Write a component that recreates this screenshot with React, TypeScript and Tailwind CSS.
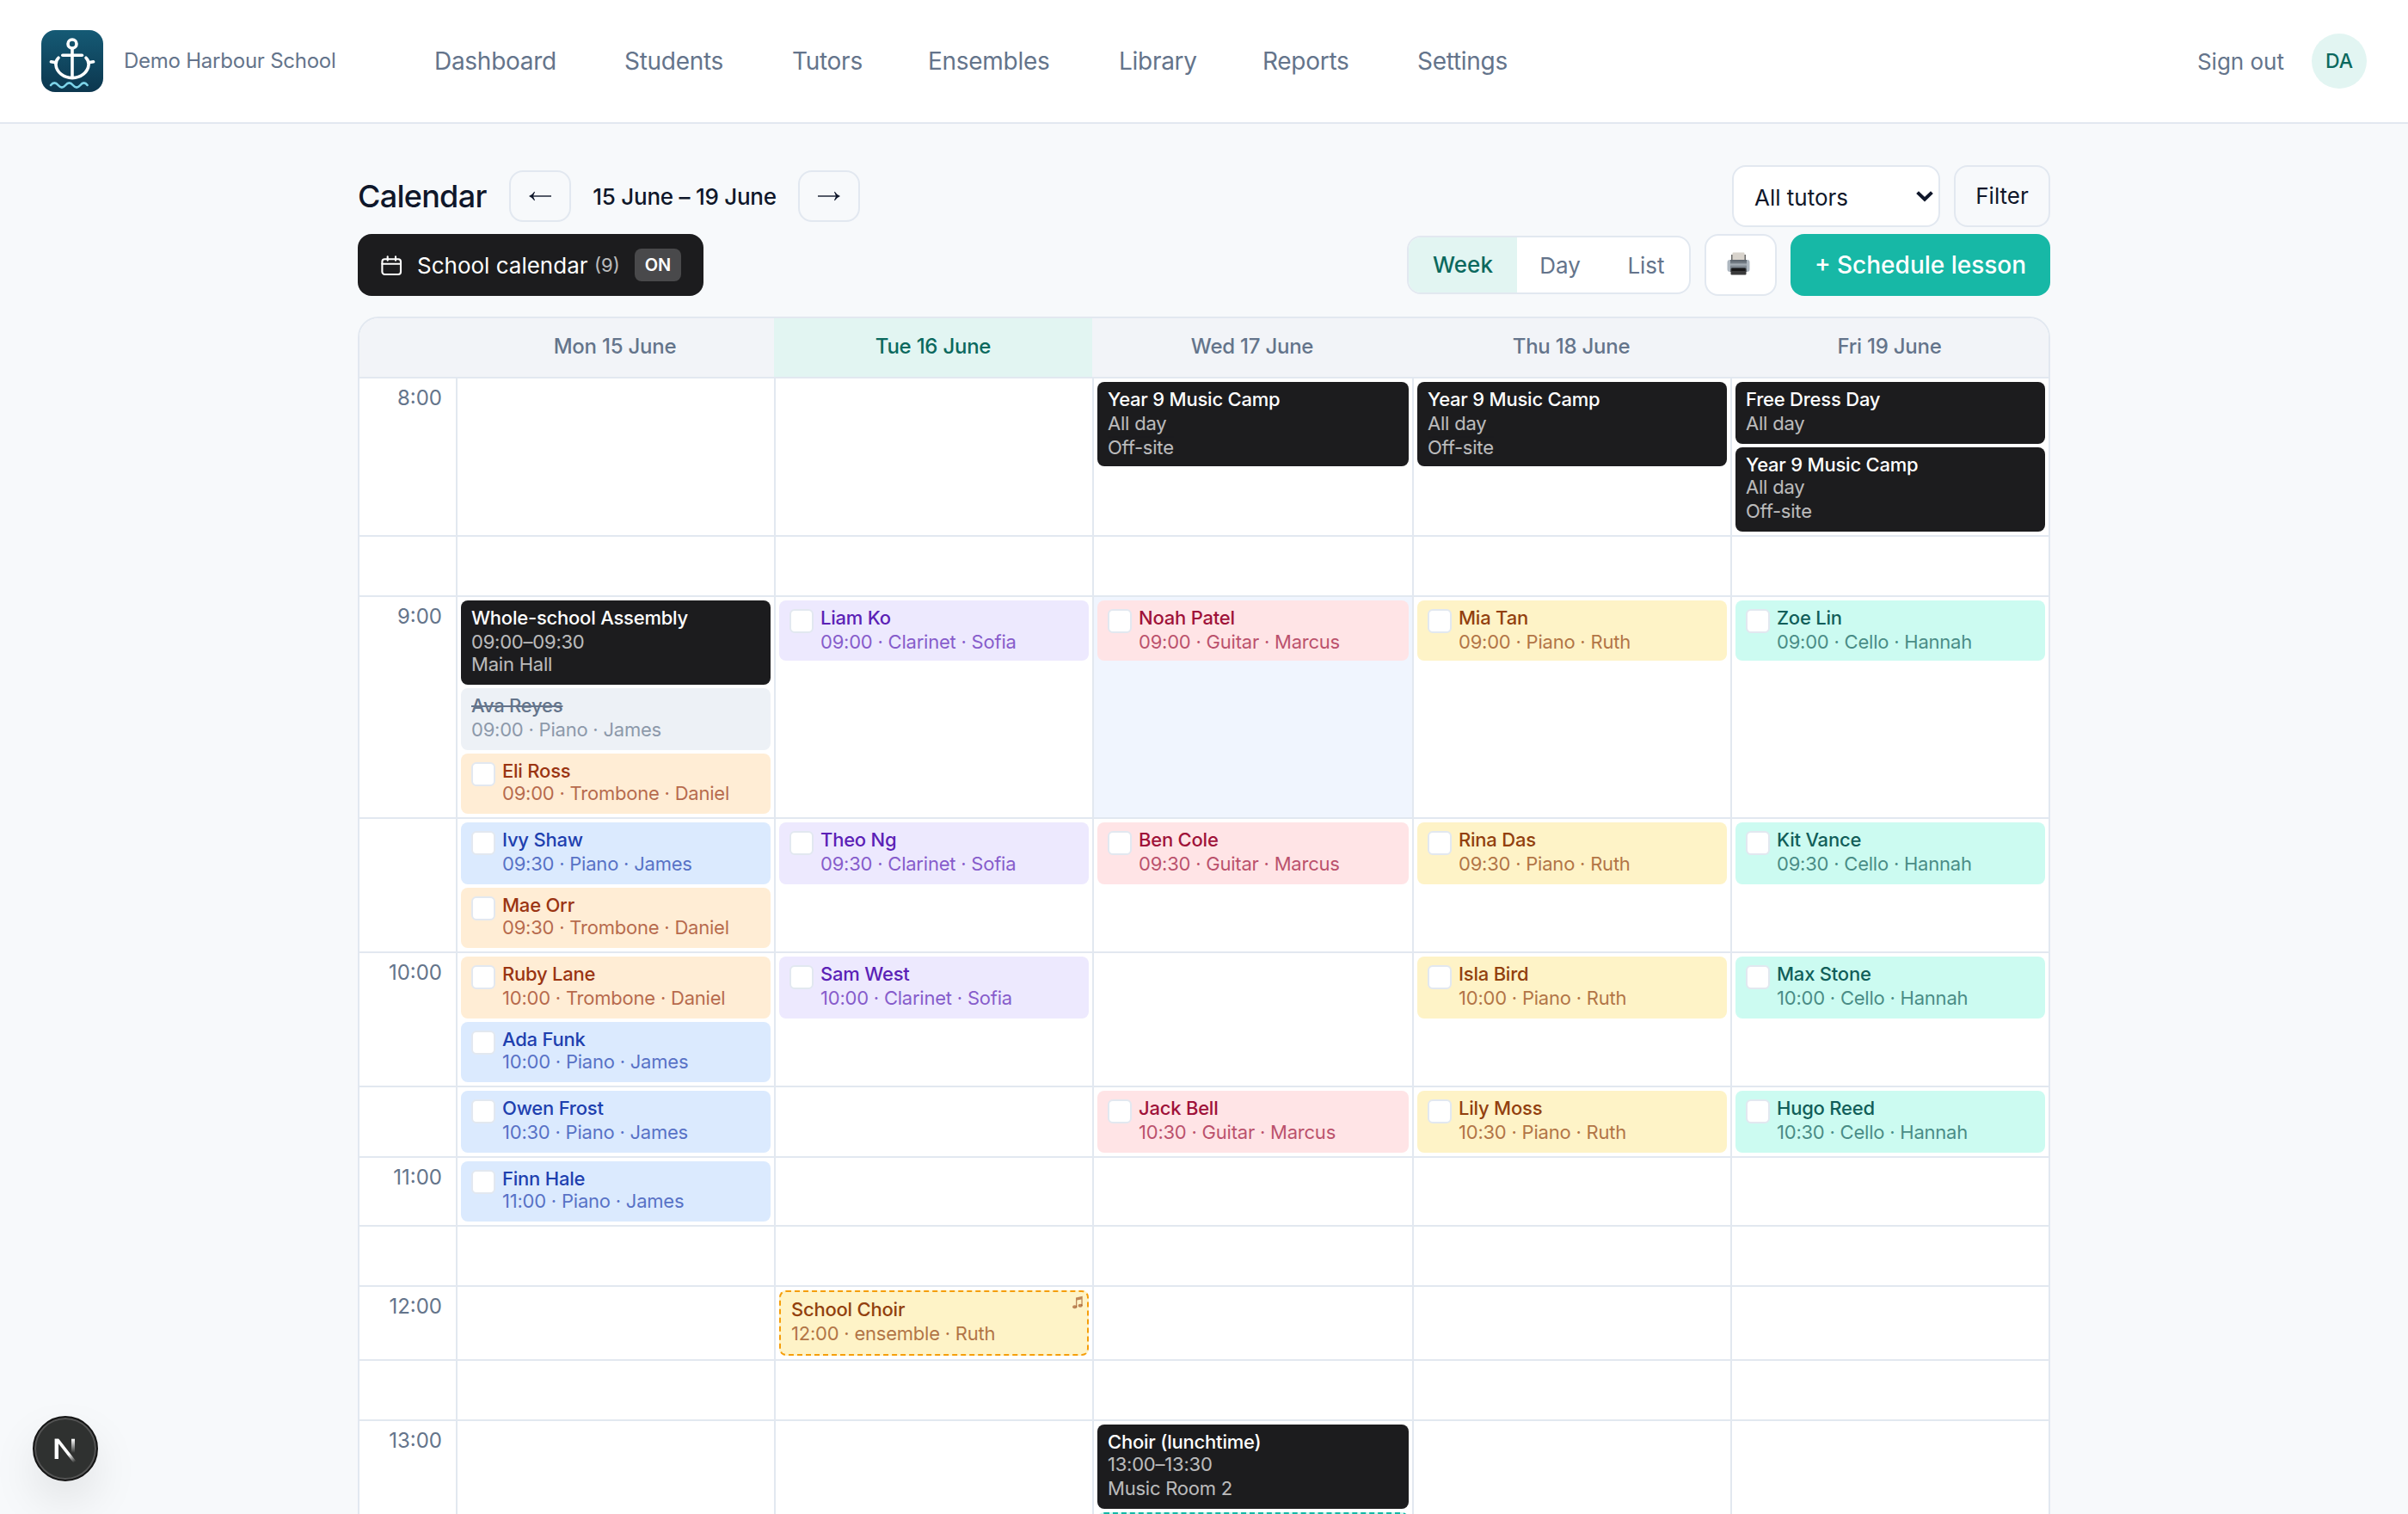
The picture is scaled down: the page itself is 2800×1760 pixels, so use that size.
import React from "react";

interface IEvent {
  name: string;
  lines: string[];
  tone: string;
  size?: string;
  // index of the detail lines that sit 2px closer to the line above
  snug?: number;
}

interface IRow {
  time?: string;
  height: string;
  days: IEvent[][];
}

const tones: Record<string, string> = {
  school: "bg-[#1c1c1e] text-white",
  cancelled: "bg-[#edf1f6] text-[#64748b]",
  orange: "bg-[#ffedd5] text-[#9a3412]",
  blue: "bg-[#dbeafe] text-[#1e40af]",
  purple: "bg-[#ede9fe] text-[#5b21b6]",
  rose: "bg-[#ffe4e6] text-[#9f1239]",
  amber: "bg-[#fef3c7] text-[#92400e]",
  teal: "bg-[#ccfbf1] text-[#115e59]",
  choir: "bg-[#fef3c7] text-[#92400e] border-2 border-dashed border-[#f59e0b]",
  group: "bg-[#ccfbf1] text-[#115e59] border-2 border-dashed border-[#14b8a6]",
};

const lesson = (name: string, line: string, tone: string, size = "h-[72px]", snug?: number): IEvent => ({
  name,
  lines: [line],
  tone,
  size,
  snug,
});

const camp: IEvent = { name: "Year 9 Music Camp", lines: ["All day", "Off-site"], tone: "school", size: "h-[98px]" };

const rows: IRow[] = [
  {
    time: "8:00",
    height: "h-[184px]",
    days: [
      [],
      [],
      [camp],
      [camp],
      [{ name: "Free Dress Day", lines: ["All day"], tone: "school", size: "h-[72px]" }, { ...camp, snug: 0 }],
    ],
  },
  { height: "h-[70px]", days: [[], [], [], [], []] },
  {
    time: "9:00",
    height: "h-[258px]",
    days: [
      [
        { name: "Whole-school Assembly", lines: ["09:00–09:30", "Main Hall"], tone: "school", size: "h-[98px]", snug: 1 },
        lesson("Ava Reyes", "09:00 · Piano · James", "cancelled"),
        lesson("Eli Ross", "09:00 · Trombone · Daniel", "orange", "h-[70px]", 0),
      ],
      [lesson("Liam Ko", "09:00 · Clarinet · Sofia", "purple", "h-[70px]")],
      [lesson("Noah Patel", "09:00 · Guitar · Marcus", "rose", "h-[70px]")],
      [lesson("Mia Tan", "09:00 · Piano · Ruth", "amber", "h-[70px]")],
      [lesson("Zoe Lin", "09:00 · Cello · Hannah", "teal", "h-[70px]")],
    ],
  },
  {
    height: "h-[156px]",
    days: [
      [
        lesson("Ivy Shaw", "09:30 · Piano · James", "blue"),
        lesson("Mae Orr", "09:30 · Trombone · Daniel", "orange", "h-[70px]", 0),
      ],
      [lesson("Theo Ng", "09:30 · Clarinet · Sofia", "purple")],
      [lesson("Ben Cole", "09:30 · Guitar · Marcus", "rose")],
      [lesson("Rina Das", "09:30 · Piano · Ruth", "amber")],
      [lesson("Kit Vance", "09:30 · Cello · Hannah", "teal")],
    ],
  },
  {
    time: "10:00",
    height: "h-[156px]",
    days: [
      [
        lesson("Ruby Lane", "10:00 · Trombone · Daniel", "orange"),
        lesson("Ada Funk", "10:00 · Piano · James", "blue", "h-[70px]", 0),
      ],
      [lesson("Sam West", "10:00 · Clarinet · Sofia", "purple")],
      [],
      [lesson("Isla Bird", "10:00 · Piano · Ruth", "amber")],
      [lesson("Max Stone", "10:00 · Cello · Hannah", "teal")],
    ],
  },
  {
    height: "h-[82px]",
    days: [
      [lesson("Owen Frost", "10:30 · Piano · James", "blue")],
      [],
      [lesson("Jack Bell", "10:30 · Guitar · Marcus", "rose")],
      [lesson("Lily Moss", "10:30 · Piano · Ruth", "amber")],
      [lesson("Hugo Reed", "10:30 · Cello · Hannah", "teal")],
    ],
  },
  {
    time: "11:00",
    height: "h-[80px]",
    days: [[lesson("Finn Hale", "11:00 · Piano · James", "blue", "h-[70px]", 0)], [], [], [], []],
  },
  { height: "h-[70px]", days: [[], [], [], [], []] },
  {
    time: "12:00",
    height: "h-[86px]",
    days: [[], [lesson("School Choir", "12:00 · ensemble · Ruth", "choir", "h-[76px]")], [], [], []],
  },
  { height: "h-[70px]", days: [[], [], [], [], []] },
  {
    time: "13:00",
    height: "h-[184px]",
    days: [
      [],
      [],
      [
        { name: "Choir (lunchtime)", lines: ["13:00–13:30", "Music Room 2"], tone: "school", size: "h-[98px]", snug: 0 },
        lesson("String Ensemble", "13:00 · ensemble · Hannah", "group", "h-[76px]"),
      ],
      [],
      [],
    ],
  },
];

const navItems = [
  { name: "Dashboard", width: "w-[221px]" },
  { name: "Students", width: "w-[195px]" },
  { name: "Tutors", width: "w-[158px]" },
  { name: "Ensembles", width: "w-[222px]" },
  { name: "Library", width: "w-[167px]" },
  { name: "Reports", width: "w-[180px]" },
  { name: "Settings", width: "w-[112px]" },
];

const dayNames = ["Mon 15 June", "Tue 16 June", "Wed 17 June", "Thu 18 June", "Fri 19 June"];

const Logo = () => (
  <svg className="size-[72px] shrink-0" viewBox="0 0 72 72" fill="none" strokeLinecap="round">
    <defs>
      <linearGradient id="sea" x1="0" y1="0" x2="0" y2="1">
        <stop offset="0" stopColor="#155a75" />
        <stop offset="1" stopColor="#0c364e" />
      </linearGradient>
    </defs>
    <rect width="72" height="72" rx="16" fill="url(#sea)" />
    <g stroke="#fff" strokeWidth="3.6">
      <circle cx="36" cy="16" r="5" />
      <path d="M36 21.5V54" />
      <path d="M24.8 29.3h22.6" />
      <path d="M20 32.2Q16.6 35.5 16.9 40C17.6 49 26 55.6 36 55.6S54.4 49 55.1 40Q55.4 35.5 52 32.2" />
      <path d="M11.4 36.8L17 37.8M60.6 36.8L55 37.8" />
    </g>
    <path d="M11 64q4.3-5.2 8.6 0t8.6 0 8.6 0 8.6 0 8.2 0" stroke="#7dd3e8" strokeWidth="2.6" />
  </svg>
);

const CalendarIcon = () => (
  <svg className="size-7 shrink-0" viewBox="0 0 28 28" fill="none" stroke="#fff" strokeWidth="2.1" strokeLinecap="round">
    <rect x="3.4" y="7.3" width="21.6" height="17.7" rx="3" />
    <path d="M3.4 12.8H25M9.7 4.2v4.6M19 4.2v4.6" />
  </svg>
);

const Arrow = ({ flip }: { flip?: boolean }) => (
  <svg className={flip ? "w-[26px] h-3 rotate-180" : "w-[26px] h-3"} viewBox="0 0 26 12">
    <path d="M3 6H26" stroke="#0f172a" strokeWidth="1.4" />
    <path d="M0 6Q4.5 4 6.3 .8L7 1.2Q5.6 4 5 6 5.6 8 7 10.8L6.3 11.2Q4.5 8 0 6Z" fill="#0f172a" />
  </svg>
);

const PrinterIcon = () => (
  <svg className="size-[27px]" viewBox="0 0 27 27">
    <defs>
      <linearGradient id="body" x1="0" y1="0" x2="0" y2="1">
        <stop offset="0" stopColor="#59616a" />
        <stop offset=".45" stopColor="#8a939c" />
        <stop offset="1" stopColor="#5d646c" />
      </linearGradient>
    </defs>
    <rect x="5" y="3" width="17" height="7" fill="#6b6b6a" />
    <rect x="6.5" y=".5" width="14" height="9.5" rx="1" fill="#d8d3cc" />
    <rect x=".5" y="9" width="26" height="14" rx="3" fill="#aeb7c0" />
    <rect x="4" y="9" width="19" height="14" fill="url(#body)" />
    <rect x="4" y="13.5" width="19" height="2" fill="#a3abb3" />
    <rect x="4.5" y="19" width="18" height="7.5" rx="1" fill="#3a3a3b" />
    <rect x="5.5" y="18.5" width="16" height="3.5" fill="#171718" />
  </svg>
);

const NoteIcon = () => (
  <svg className="absolute top-1 right-[5px] w-3 h-4" viewBox="0 0 12 16" fill="#92400e" fillOpacity=".6">
    <path d="M4 2.6L11.7.8V12H10.4V4.4L5.3 5.6V13.5H4Z" />
    <ellipse cx="2.7" cy="13.2" rx="2.6" ry="2" />
    <ellipse cx="9.2" cy="11.7" rx="2.6" ry="2" />
  </svg>
);

const NextBadge = () => (
  <div className="fixed left-[38px] top-[1646px] size-[76px] rounded-full bg-[#2f3130] border-2 border-[#151515] shadow-[inset_0_0_0_2px_#545454,0_24px_56px_-6px_rgba(0,0,0,0.13)] flex items-center justify-center">
    <svg className="size-[72px]" viewBox="0 0 72 72" fill="none">
      <defs>
        <linearGradient id="diag" x1="36" y1="34" x2="48" y2="51" gradientUnits="userSpaceOnUse">
          <stop offset=".45" stopColor="#fff" />
          <stop offset="1" stopColor="#fff" stopOpacity="0" />
        </linearGradient>
        <linearGradient id="stem" x1="0" y1="25" x2="0" y2="41" gradientUnits="userSpaceOnUse">
          <stop offset="0" stopColor="#fff" />
          <stop offset="1" stopColor="#fff" stopOpacity="0" />
        </linearGradient>
      </defs>
      <path d="M23.6 24.7H28V48H23.6Z" fill="#fff" />
      <path d="M23.6 24.7H28.4L48.4 50.4L45.4 52.4L25.5 27Z" fill="url(#diag)" />
      <path d="M43 24.7H47V41H43Z" fill="url(#stem)" />
    </svg>
  </div>
);

const EventCard = ({ item }: { item: IEvent }) => {
  const ensemble = item.tone === "choir" || item.tone === "group";
  const checkable = !ensemble && item.tone !== "school" && item.tone !== "cancelled";
  return (
    <div className={`relative shrink-0 flex gap-2 rounded-[8px] px-3 pt-[6px] text-[22px] leading-[28px] whitespace-nowrap ${item.size} ${tones[item.tone]}`}>
      {checkable && <span className="mt-1 size-7 shrink-0 rounded-[6px] border-2 border-[#e2e8f0] bg-white" />}
      <div>
        <p className={item.tone === "cancelled" ? "font-medium tracking-[-0.01em] line-through" : "font-medium tracking-[-0.01em]"}>{item.name}</p>
        {item.lines.map((line, i) => (
          <p key={line} className={item.snug === i ? "-mt-[2px] opacity-70 tracking-[-0.01em]" : "opacity-70 tracking-[-0.01em]"}>{line}</p>
        ))}
      </div>
      {ensemble && <NoteIcon />}
    </div>
  );
};

const Header = () => (
  <header className="h-36 shrink-0 bg-white border-b-2 border-[#e2e8f0] px-12 flex items-center text-[#64748b]">
    <Logo />
    <span className="ml-6 w-[361px] text-[24px] tracking-[-0.01em]">Demo Harbour School</span>
    <nav className="flex text-[28px]">
      {navItems.map((item) => (
        <a key={item.name} className={`${item.width} tracking-[-0.01em]`}>{item.name}</a>
      ))}
    </nav>
    <span className="ml-auto text-[26px]">Sign out</span>
    <span className="ml-8 size-16 rounded-full bg-[#e2f5f2] text-[#0b695e] text-[23px] font-medium flex items-center justify-center">DA</span>
  </header>
);

const Toolbar = () => (
  <div className="flex flex-col gap-2">
    <div className="flex items-center h-[72px] text-[#0f172a]">
      <h1 className="w-[176px] text-[36px] font-medium tracking-[-0.02em]">Calendar</h1>
      <button className="w-[72px] h-[60px] rounded-[16px] border-2 border-[#e2e8f0] flex items-center justify-center"><Arrow /></button>
      <span className="w-[264px] text-center text-[26px] font-medium tracking-[-0.01em]">15 June – 19 June</span>
      <button className="w-[72px] h-[60px] rounded-[16px] border-2 border-[#e2e8f0] flex items-center justify-center"><Arrow flip /></button>
      <div className="ml-auto flex gap-4 text-[26px]">
        <div className="w-[242px] h-[72px] rounded-[16px] border-2 border-[#e2e8f0] bg-white pl-6 pr-[6px] flex items-center justify-between">
          <span className="pt-[2px]">All tutors</span>
          <svg className="w-5 h-[14px]" viewBox="0 0 20 14" fill="none" stroke="#0f172a" strokeWidth="4">
            <path d="M1.6 2.6L10 10.8 18.4 2.6" />
          </svg>
        </div>
        <button className="w-28 h-[72px] rounded-[16px] border-2 border-[#e2e8f0] pb-[2px]">Filter</button>
      </div>
    </div>
    <div className="flex items-center h-[72px] text-[26px]">
      <button className="w-[402px] h-[72px] rounded-[16px] bg-[#1c1c1e] text-white pl-[25px] pr-[26px] flex items-center">
        <CalendarIcon />
        <span className="ml-4 w-[206px] text-left">School calendar</span>
        <span className="text-[22px] opacity-70">(9)</span>
        <span className="ml-auto w-[54px] h-[38px] rounded-[8px] bg-white/20 text-[20px] font-semibold leading-[38px]">ON</span>
      </button>
      <div className="ml-auto w-[330px] h-[68px] rounded-[16px] border-2 border-[#e2e8f0] bg-white flex items-center overflow-hidden text-[#64748b]">
        <span className="w-[126px] h-16 bg-[#e2f5f2] text-[#0b695e] font-medium leading-[64px] text-center">Week</span>
        <span className="w-[100px] text-center">Day</span>
        <span className="w-[100px] text-center">List</span>
      </div>
      <button className="ml-4 w-[84px] h-[72px] rounded-[16px] border-2 border-[#e2e8f0] bg-white flex items-center justify-center pr-[6px] pb-[4px]"><PrinterIcon /></button>
      <button className="ml-4 w-[302px] h-[72px] rounded-[16px] bg-[#17b8a6] text-white text-[28px] font-medium">+ Schedule lesson</button>
    </div>
  </div>
);

const WeekGrid = () => (
  <div className="mt-6 rounded-t-[24px] border-2 border-b-0 border-[#e2e8f0] bg-white overflow-hidden">
    <div className="grid grid-cols-[112px_370px_370px_372px_370px_370px] h-[70px] border-b-2 border-[#e2e8f0] bg-[#f2f4f8] text-[24px] font-medium text-[#64748b] text-center leading-[66px]">
      <span />
      {dayNames.map((day) => (
        <span key={day} className={day === "Tue 16 June" ? "bg-[#e2f5f2] text-[#0b695e] tracking-[-0.01em]" : "tracking-[-0.01em]"}>{day}</span>
      ))}
    </div>
    {rows.map((row, r) => (
      <div key={r} className={`grid grid-cols-[112px_370px_370px_372px_370px_370px] border-b-2 border-[#e2e8f0] ${row.height}`}>
        <span className="pt-[7px] pr-4 text-right text-[24px] leading-[32px] text-[#64748b]">{row.time}</span>
        {row.days.map((events, d) => (
          <div key={d} className={`border-l-2 border-[#e2e8f0] p-1 flex flex-col gap-1 ${r === 2 && d === 2 ? "bg-[#f0f5fe]" : ""}`}>
            {events.map((item) => (<EventCard key={item.name} item={item} />))}
          </div>
        ))}
      </div>
    ))}
  </div>
);

const App = () => {
  return (
    <div className="w-[2800px] h-[1760px] overflow-hidden flex flex-col bg-[#f7f9fb] font-['Inter','Liberation_Sans',sans-serif]">
      <Header />
      <main className="w-[1968px] mx-auto pt-12">
        <Toolbar />
        <WeekGrid />
      </main>
      <NextBadge />
    </div>
  );
};

export default App;
